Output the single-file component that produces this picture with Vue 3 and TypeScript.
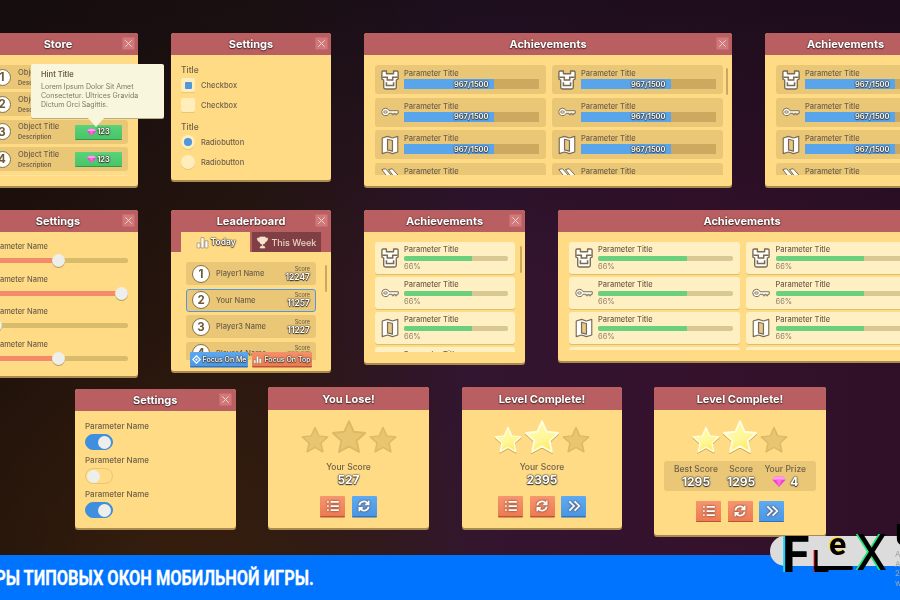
<script setup lang="ts">
type Kind = 'store' | 'checks' | 'bars' | 'sliders' | 'board' | 'greens' | 'toggles' | 'result'

interface Win {
  id: number
  kind: Kind
  title: string
  x: number
  y: number
  w: number
  h: number
  close?: boolean
  listH?: number
  rowW?: number
  cols?: number
  scroll?: boolean
  stars?: number
  score?: string
  next?: boolean
  orangeRefresh?: boolean
  prize?: boolean
}

const windows: Win[] = [
  { id: 1, kind: 'store', title: 'Store', x: -22, y: 33, w: 160, h: 153, close: true },
  { id: 2, kind: 'checks', title: 'Settings', x: 171, y: 33, w: 160, h: 147, close: true },
  { id: 3, kind: 'bars', title: 'Achievements', x: 364, y: 33, w: 368, h: 153, close: true, listH: 110, rowW: 171, cols: 2, scroll: true },
  { id: 4, kind: 'bars', title: 'Achievements', x: 765, y: 33, w: 161, h: 153, close: true, listH: 110, rowW: 171, cols: 1 },
  { id: 5, kind: 'sliders', title: 'Settings', x: -22, y: 210, w: 160, h: 166, close: true },
  { id: 6, kind: 'board', title: 'Leaderboard', x: 171, y: 210, w: 160, h: 161, close: true },
  { id: 7, kind: 'greens', title: 'Achievements', x: 364, y: 210, w: 161, h: 153, close: true, listH: 110, rowW: 140, cols: 1, scroll: true },
  { id: 8, kind: 'greens', title: 'Achievements', x: 558, y: 210, w: 368, h: 151, close: true, listH: 108, rowW: 171, cols: 2 },
  { id: 9, kind: 'toggles', title: 'Settings', x: 75, y: 389, w: 160.5, h: 139, close: true },
  { id: 10, kind: 'result', title: 'You Lose!', x: 268, y: 387, w: 161, h: 141, stars: 0, score: '527' },
  { id: 11, kind: 'result', title: 'Level Complete!', x: 462, y: 387, w: 160, h: 141, stars: 2, score: '2395', next: true, orangeRefresh: true },
  { id: 12, kind: 'result', title: 'Level Complete!', x: 654, y: 387, w: 172, h: 148, stars: 2, next: true, orangeRefresh: true, prize: true },
]

const storeRows = [1, 2, 3, 4]
const icons = ['castle', 'key', 'map', 'swords']
const sliderValues = [0.5, 1, 0, 0.5]
const toggles = [true, false, true]
const players = [
  { place: 1, name: 'Player1 Name', score: '12247' },
  { place: 2, name: 'Your Name', score: '11257', me: true },
  { place: 3, name: 'Player3 Name', score: '11227' },
  { place: 4, name: 'Player4 Name', score: '11207' },
]

function listRows(win: Win): { key: string; icon: string }[] {
  const rows: { key: string; icon: string }[] = []
  for (const icon of icons) {
    for (let c = 0; c < (win.cols ?? 1); c++) {
      rows.push({ key: `${icon}-${c}`, icon })
    }
  }
  return rows
}

function gridColumns(win: Win): string {
  return `repeat(${win.cols ?? 1}, ${win.rowW}px)`
}
</script>

<template>
  <div class="page">
    <svg class="defs" width="0" height="0" aria-hidden="true">
      <defs>
        <linearGradient id="gold" x1="0.2" y1="0" x2="0.7" y2="1">
          <stop offset="0" stop-color="#fffbb0" />
          <stop offset="0.55" stop-color="#fff79a" />
          <stop offset="1" stop-color="#ffe95e" />
        </linearGradient>
        <symbol id="castle" viewBox="2 1 20 22">
          <path d="M3 3.500Q3 2 4.500 2H8v3h8V2h3.500Q21 2 21 3.500V11l-2 1v8q0 2-2 2H7q-2 0-2-2v-8l-2-1z" fill="#fff" stroke="#7a6a50" stroke-width="1.500" stroke-linejoin="round" />
          <path d="M3.500 9H9v3h6V9h5.500M8 14.500v3.500h8v-3.500" fill="none" stroke="#7a6a50" stroke-width="1.700" />
        </symbol>
        <symbol id="key" viewBox="0 0 24 24">
          <path d="M6 7a5 5 0 0 1 4.700 3.300H23v3.400h-2v2h-2v-2h-2v2h-2v-2h-4.300A5 5 0 1 1 6 7z" fill="#fff" stroke="#7a6a50" stroke-width="1.300" stroke-linejoin="round" />
          <ellipse cx="6" cy="12" rx="2.500" ry="1.700" fill="#f2dca6" stroke="#7a6a50" stroke-width="1" />
        </symbol>
        <symbol id="map" viewBox="1 0 22 24">
          <path d="M2.500 3.500L9 1.500l6 2 6.500-2v19L15 22.500l-6-2-6.500 2z" fill="#fff" stroke="#7a6a50" stroke-width="1.400" stroke-linejoin="round" />
          <path d="M9 5l6 1.500v13L9 18z" fill="#e6c98a" stroke="#7a6a50" stroke-width="1.500" stroke-linejoin="round" />
        </symbol>
        <symbol id="swords" viewBox="0 0 24 24">
          <path d="M1 2l5-1 9 10-4 4zM10 2l5-1 9 10-4 4z" fill="#fff" stroke="#7a6a50" stroke-width="1.300" stroke-linejoin="round" />
        </symbol>
        <symbol id="gem" viewBox="0 0 24 20">
          <path d="M5 1h14l5 6-12 13L0 7z" fill="#f23fd0" />
          <path d="M5 1h14l5 6H0z" fill="#ff9cf0" />
          <path d="M7 7h10l-5 13z" fill="#ff6be0" />
        </symbol>
        <symbol id="star" viewBox="0 0 24 24">
          <path d="M12 2l3 6.700 7.200.8-5.400 4.900 1.500 7.100L12 17.900l-6.300 3.600 1.500-7.100L1.800 9.500 9 8.700z" stroke-linejoin="round" stroke-width="1.200" />
        </symbol>
        <symbol id="bars" viewBox="0 0 24 24">
          <path d="M2 13h5.500v9H2zM9.200 3h5.500v19H9.200zM16.500 9H22v13h-5.500z" fill="#fff" stroke="#7a6a50" stroke-width="1" />
        </symbol>
        <symbol id="cup" viewBox="0 0 24 24">
          <path d="M7 2h10v8a5 5 0 0 1-10 0zM7 4H2.500c0 4 1.500 6 5 6.500M17 4h4.500c0 4-1.500 6-5 6.500M12 15v4M7.500 22l1.500-3h6l1.500 3z" fill="#f4e4cc" stroke="#f4e4cc" stroke-width="1.500" />
        </symbol>
        <symbol id="focus" viewBox="0 0 24 24">
          <path d="M12 2l10 10-10 10L2 12z" fill="none" stroke="#fff" stroke-width="3" />
          <circle cx="12" cy="12" r="3" fill="#fff" />
        </symbol>
      </defs>
    </svg>

    <section
      v-for="win in windows"
      :key="win.id"
      class="win"
      :class="`win--${win.kind}`"
      :style="{ left: `${win.x}px`, top: `${win.y}px`, width: `${win.w}px`, height: `${win.h}px` }"
    >
      <header class="win-head">
        <h2 class="win-title">{{ win.title }}</h2>
        <span v-if="win.close" class="win-close">
          <svg viewBox="0 0 14 14"><path d="M3 3l8 8M11 3l-8 8" /></svg>
        </span>
      </header>

      <div v-if="win.kind === 'store'" class="store-list">
        <div v-for="n in storeRows" :key="n" class="store-row">
          <span class="place">{{ n }}</span>
          <div class="store-text">
            <b>Object Title</b>
            <small>Description</small>
          </div>
          <span class="buy">
            <svg class="gem"><use href="#gem" /></svg>
            <span class="outlined">123</span>
          </span>
        </div>
        <div class="store-row store-row--stub" />
        <div class="hint">
          <strong>Hint Title</strong>
          <p>Lorem Ipsum Dolor Sit Amet Consectetur. Ultrices Gravida Dictum Orci Sagittis.</p>
        </div>
      </div>

      <div v-else-if="win.kind === 'checks'" class="checks">
        <h3>Title</h3>
        <label class="check-row"><span class="box box--on"><i /></span>Checkbox</label>
        <label class="check-row"><span class="box" />Checkbox</label>
        <h3 class="checks-second">Title</h3>
        <label class="check-row"><span class="box box--round box--on"><i /></span>Radiobutton</label>
        <label class="check-row"><span class="box box--round" />Radiobutton</label>
      </div>

      <div v-else-if="win.kind === 'bars'" class="list-wrap" :style="{ height: `${win.listH}px` }">
        <div class="grid" :style="{ gridTemplateColumns: gridColumns(win) }">
          <div v-for="row in listRows(win)" :key="row.key" class="bar-row">
            <svg class="row-icon"><use :href="`#${row.icon}`" /></svg>
            <div class="row-main row-main--bar">
              <span class="row-title">Parameter Title</span>
              <div class="bluebar"><div class="bluefill" /><span class="outlined">967/1500</span></div>
            </div>
          </div>
        </div>
        <span v-if="win.scroll" class="scrollbar scrollbar--bars" />
      </div>

      <div v-else-if="win.kind === 'sliders'" class="sliders">
        <div v-for="(value, i) in sliderValues" :key="i" class="slider">
          <span class="param">Parameter Name</span>
          <div class="track">
            <div class="track-fill" :style="{ width: `${value * 100}%` }" />
            <span class="thumb" :style="{ left: `calc(7px + (100% - 14px) * ${value})` }" />
          </div>
        </div>
      </div>

      <template v-else-if="win.kind === 'board'">
        <div class="tabs">
          <span class="tab tab--on"><svg><use href="#bars" /></svg><span class="outlined">Today</span></span>
          <span class="tab"><svg><use href="#cup" /></svg>This Week</span>
        </div>
        <div class="board">
          <div class="board-list">
            <div v-for="p in players" :key="p.place" class="board-row" :class="{ 'board-row--me': p.me }">
              <span class="place place--board">{{ p.place }}</span>
              <span class="board-name">{{ p.name }}</span>
              <span class="board-score"><small>Score</small><span class="outlined">{{ p.score }}</span></span>
            </div>
          </div>
          <span class="scrollbar scrollbar--board" />
          <div class="focus">
            <span class="focus-btn focus-btn--blue"><svg><use href="#focus" /></svg><span class="outlined">Focus On Me</span></span>
            <span class="focus-btn focus-btn--orange"><svg><use href="#bars" /></svg><span class="outlined">Focus On Top</span></span>
          </div>
        </div>
      </template>

      <div v-else-if="win.kind === 'greens'" class="list-wrap" :style="{ height: `${win.listH}px` }">
        <div class="grid grid--greens" :style="{ gridTemplateColumns: gridColumns(win) }">
          <div v-for="row in listRows(win)" :key="row.key" class="green-row">
            <svg class="row-icon"><use :href="`#${row.icon}`" /></svg>
            <div class="row-main">
              <span class="row-title">Parameter Title</span>
              <div class="greenbar"><div class="greenfill" /></div>
              <span class="percent">66%</span>
            </div>
          </div>
        </div>
        <span v-if="win.scroll" class="scrollbar scrollbar--greens" />
      </div>

      <div v-else-if="win.kind === 'toggles'" class="toggles">
        <div v-for="(on, i) in toggles" :key="i" class="toggle-row">
          <span class="param">Parameter Name</span>
          <span class="toggle" :class="{ 'toggle--on': on }"><i /></span>
        </div>
      </div>

      <div v-else class="result">
        <div class="stars">
          <svg v-for="n in 3" :key="n" class="star" :class="{ 'star--big': n === 2, 'star--gold': n <= (win.stars ?? 0) }"><use href="#star" /></svg>
        </div>
        <div v-if="win.prize" class="summary">
          <div><span>Best Score</span><b class="outlined">1295</b></div>
          <div><span>Score</span><b class="outlined">1295</b></div>
          <div><span>Your Prize</span><b class="outlined prize"><svg class="gem gem--big"><use href="#gem" /></svg>4</b></div>
        </div>
        <div v-else class="your-score">
          <span>Your Score</span>
          <b class="outlined">{{ win.score }}</b>
        </div>
        <div class="actions">
          <span class="action action--orange">
            <svg viewBox="0 0 24 24"><path d="M8 5h14M8 12h14M8 19h14M2 5h2.500M2 12h2.500M2 19h2.500" /></svg>
          </span>
          <span class="action" :class="win.orangeRefresh ? 'action--orange' : 'action--blue'">
            <svg viewBox="0 0 24 24"><path d="M4 11a8 8 0 0 1 14-4l2 2M20 13a8 8 0 0 1-14 4l-2-2M20 3v6h-6M4 21v-6h6" /></svg>
          </span>
          <span v-if="win.next" class="action action--blue">
            <svg viewBox="0 0 24 24"><path d="M4 4l8 8-8 8M13 4l8 8-8 8" /></svg>
          </span>
        </div>
      </div>
    </section>

    <footer class="band"><span>ПРИМЕРЫ ТИПОВЫХ ОКОН МОБИЛЬНОЙ ИГРЫ.</span></footer>

    <div class="brand">
      <div class="brand-pill" />
      <div class="brand-notes"><span>А</span><span>А</span><span>2</span><span>w</span></div>
      <span class="logo logo-f">F</span>
      <span class="logo logo-l">L</span>
      <i class="logo-foot" />
      <span class="logo logo-e">e</span>
      <span class="logo logo-x">X</span>
      <span class="logo logo-u">U</span>
    </div>
  </div>
</template>

<style scoped>
.page {
  position: relative;
  width: 900px;
  height: 600px;
  overflow: hidden;
  font-family: Inter, "Liberation Sans", sans-serif;
  color: #6f604a;
  background:
    linear-gradient(180deg, rgba(15, 10, 18, 0.6) 0, rgba(15, 10, 18, 0) 280px),
    radial-gradient(ellipse 330px 260px at 180px 560px, rgba(60, 34, 14, 0.7), rgba(60, 34, 14, 0)),
    linear-gradient(90deg, #1f110a 0, #28160f 28%, #321530 52%, #35112c 78%, #2f1028 100%);
}

.defs {
  position: absolute;
}

.win {
  position: absolute;
  display: flex;
  flex-direction: column;
  box-sizing: border-box;
  background: #ffdb85;
  border-radius: 3px;
  box-shadow: 0 2px 0 #a98b50;
  will-change: transform;
}

.win-head {
  position: relative;
  flex: none;
  display: flex;
  align-items: center;
  justify-content: center;
  height: 22px;
  background: #b95f61;
  border-radius: 3px 3px 0 0;
}

.win--result .win-head {
  height: 23px;
}

.win-title {
  margin: 0;
  font-size: 11px;
  font-weight: 700;
  color: #fff;
  text-shadow: 0 1px 1px #4d2a2a, 0 0 2px #4d2a2a;
}

.win-close {
  position: absolute;
  top: 4px;
  right: 3.500px;
  width: 13px;
  height: 13px;
  background: #d0787a;
  border: 1px solid #c56c6e;
  box-sizing: border-box;
  border-radius: 1px;
}

.win-close svg {
  display: block;
  width: 11px;
  height: 11px;
}

.win-close path {
  stroke: #f5d8d0;
  stroke-width: 1.200;
  fill: none;
}

.outlined {
  color: #fff;
  text-shadow: 0 0 1px #3d372d, 0 0 1px #3d372d, 0 1px 1px #3d372d, 0 0 2px #3d372d;
}

/* store */
.store-list {
  position: relative;
  display: flex;
  flex-direction: column;
  gap: 3.400px;
  padding: 10px 10px 0;
  height: 110px;
}

.store-row {
  flex: none;
  display: flex;
  align-items: center;
  height: 24px;
  padding-left: 5.500px;
  background: #eac777;
  border-radius: 3px;
}

.store-row--stub {
  height: 1px;
  background: #ffe49d;
}

.place {
  flex: none;
  display: flex;
  align-items: center;
  justify-content: center;
  box-sizing: border-box;
  width: 17px;
  height: 17px;
  border-radius: 50%;
  background: #fff;
  border: 1.500px solid #8a6f3e;
  font-size: 11.500px;
  font-weight: 700;
  color: #6f5b35;
}

.store-text {
  display: flex;
  flex-direction: column;
  width: 57px;
  margin-left: 7.500px;
  line-height: 9px;
}

.store-text b {
  font-size: 7.500px;
  font-weight: 500;
  white-space: nowrap;
}

.store-text small {
  margin-top: 1px;
  font-size: 6px;
  font-weight: 600;
  white-space: nowrap;
}

.buy {
  display: flex;
  align-items: center;
  justify-content: center;
  gap: 1.500px;
  width: 46.500px;
  height: 14px;
  font-size: 7.500px;
  font-weight: 600;
  background: linear-gradient(180deg, #5ad379, #49c467);
  border-radius: 1px;
  box-shadow: 0 1px 0 #2e9a49;
}

.gem {
  width: 9px;
  height: 8px;
}

.gem--big {
  width: 14px;
  height: 11px;
}

.hint {
  position: absolute;
  z-index: 2;
  top: 9px;
  left: 53px;
  box-sizing: border-box;
  width: 133px;
  height: 54px;
  padding: 6px 10px;
  color: #7e7764;
  background: #f8f6dc;
  border-radius: 2px;
  box-shadow: 0 1px 0 #b8ae86;
}

.hint::after {
  content: "";
  position: absolute;
  left: 57px;
  top: 54px;
  border-top: 9px solid #f8f6dc;
  border-left: 8px solid transparent;
  border-right: 8px solid transparent;
}

.hint strong {
  display: block;
  margin-bottom: 3px;
  font-size: 7.500px;
  font-weight: 600;
  color: #6f604a;
}

.hint p {
  margin: 0;
  font-size: 7px;
  line-height: 9.100px;
}

/* checks */
.checks {
  padding: 10px 10px 0;
}

.checks h3 {
  margin: 0 0 3px;
  font-size: 8.500px;
  line-height: 10px;
  font-weight: 500;
}

.checks h3.checks-second {
  margin-top: 10px;
}

.check-row {
  display: flex;
  align-items: center;
  gap: 6px;
  height: 14px;
  margin-bottom: 6px;
  font-size: 7.500px;
  font-weight: 500;
}

.box {
  flex: none;
  display: flex;
  align-items: center;
  justify-content: center;
  width: 14px;
  height: 14px;
  background: #ffeebc;
  border-radius: 2px;
  box-shadow: 0 1px 0 #e6c777;
}

.box--round {
  border-radius: 50%;
}

.box i {
  width: 7px;
  height: 7px;
  background: #4f97e0;
  border-radius: 1px;
}

.box--round i {
  width: 7.500px;
  height: 7.500px;
  border-radius: 50%;
}

/* list windows */
.list-wrap {
  position: relative;
  flex: none;
  overflow: hidden;
  margin-top: 10px;
  padding: 0 10px 0 10.500px;
}

.grid {
  display: grid;
  gap: 3.500px 6px;
}

.grid--greens {
  gap: 3px 6.500px;
}

.bar-row {
  display: flex;
  align-items: center;
  height: 29px;
  background: #eac777;
  border-radius: 3px;
}

.green-row {
  display: flex;
  align-items: center;
  height: 32px;
  background: #fff0c4;
  border-radius: 3px;
  box-shadow: 0 1px 0 #e0bd68;
}

.row-icon {
  flex: none;
  width: 18px;
  height: 20px;
  margin: 0 5.500px 0 6px;
}

.row-main {
  flex: 1;
  min-width: 0;
  padding-right: 7px;
}

.row-main--bar {
  padding-bottom: 1px;
}

.row-title {
  display: block;
  font-size: 7.500px;
  line-height: 9px;
  font-weight: 500;
  white-space: nowrap;
}

.bluebar {
  position: relative;
  display: flex;
  align-items: center;
  justify-content: center;
  height: 10px;
  margin-top: 1px;
  background: #cca95f;
  font-size: 7.500px;
  font-weight: 600;
}

.bluefill {
  position: absolute;
  inset: 0 33% 0 0;
  background: #58a5ec;
}

.bluebar .outlined {
  position: relative;
}

.greenbar {
  height: 4.500px;
  margin-top: 2px;
  border-radius: 2px;
  background: #d9c794;
  overflow: hidden;
}

.greenfill {
  width: 66%;
  height: 100%;
  background: #6ad07e;
}

.percent {
  display: block;
  margin-top: 2.500px;
  font-size: 7.500px;
  line-height: 8px;
  color: #8b7f68;
}

.scrollbar {
  position: absolute;
  width: 2px;
  border-radius: 1px;
  background: #c9a866;
}

.scrollbar--bars {
  top: 3px;
  right: 4px;
  height: 27px;
}

.scrollbar--greens {
  top: 4px;
  right: 3px;
  height: 27px;
}

/* sliders */
.sliders {
  padding: 10px 10px 0;
}

.slider {
  height: 32.500px;
}

.param {
  display: block;
  font-size: 7.500px;
  line-height: 10px;
  font-weight: 500;
  white-space: nowrap;
}

.track {
  position: relative;
  height: 5px;
  margin-top: 6px;
  background: #d9bb6c;
  border-radius: 2.500px;
}

.track-fill {
  height: 100%;
  background: #f58a6b;
  border-radius: 2.500px;
}

.thumb {
  position: absolute;
  top: -4px;
  width: 13px;
  height: 13px;
  margin-left: -6.500px;
  background: #eeeeea;
  border-radius: 50%;
  box-shadow: 0 1px 0 #b79a5c;
}

/* leaderboard */
.tabs {
  flex: none;
  display: flex;
  gap: 1.500px;
  height: 20px;
  padding: 0 10px;
  background: #b95f61;
}

.tab {
  flex: 1;
  display: flex;
  align-items: center;
  justify-content: center;
  gap: 2px;
  font-size: 9px;
  font-weight: 500;
  white-space: nowrap;
  color: #e9d2c0;
  background: #7f3f44;
}

.tab--on {
  background: #ffdb85;
  font-size: 8.500px;
  font-weight: 600;
}

.tab svg {
  width: 13px;
  height: 13px;
}

.board {
  position: relative;
  flex: 1;
  min-height: 0;
  padding: 10px 15px 0;
}

.board-list {
  display: flex;
  flex-direction: column;
  gap: 3.500px;
  height: 98px;
  overflow: hidden;
}

.board-row {
  flex: none;
  display: flex;
  align-items: center;
  box-sizing: border-box;
  height: 23px;
  padding: 0 6px;
  background: #eac777;
  border-radius: 3px;
}

.board-row--me {
  border: 1px solid #4f97e0;
  padding: 0 5px;
}

.place--board {
  width: 18px;
  height: 18px;
}

.board-name {
  flex: 1;
  margin-left: 6px;
  font-size: 7.500px;
  font-weight: 500;
}

.board-score {
  display: flex;
  flex-direction: column;
  align-items: flex-end;
  font-size: 8.500px;
  font-weight: 600;
  line-height: 9px;
}

.board-score small {
  font-size: 5.500px;
  font-weight: 500;
  line-height: 7px;
}

.scrollbar--board {
  top: 13px;
  right: 4px;
  height: 27px;
}

.focus {
  position: absolute;
  left: 19px;
  bottom: 5px;
  display: flex;
  gap: 4px;
}

.focus-btn {
  display: flex;
  align-items: center;
  justify-content: center;
  gap: 2px;
  height: 14px;
  font-size: 7px;
  font-weight: 500;
  white-space: nowrap;
  border-radius: 1px;
}

.focus-btn svg {
  width: 9px;
  height: 9px;
}

.focus-btn--blue {
  width: 58px;
  background: linear-gradient(180deg, #5ba8f0, #4d98e6);
  box-shadow: 0 1.500px 0 #2f74bd;
}

.focus-btn--orange {
  width: 60px;
  background: linear-gradient(180deg, #f4906a, #ec7a52);
  box-shadow: 0 1.500px 0 #bb5335;
}

/* toggles */
.toggles {
  padding: 11px 10px 0;
}

.toggle-row {
  height: 34px;
}

.toggle-row .param {
  line-height: 9px;
  font-size: 8px;
}

.toggle {
  display: flex;
  align-items: center;
  box-sizing: border-box;
  width: 27.500px;
  height: 16px;
  margin-top: 3px;
  padding: 0 1px;
  border: 1px solid #ebc672;
  border-radius: 8px;
  background: #ffdb85;
}

.toggle i {
  width: 13px;
  height: 13px;
  border-radius: 50%;
  background: #eeeeea;
}

.toggle--on {
  justify-content: flex-end;
  background: #3f8fde;
  border-color: #3f8fde;
}

/* result */
.result {
  flex: 1;
  display: flex;
  flex-direction: column;
  align-items: center;
  padding-top: 10px;
}

.stars {
  display: flex;
  align-items: flex-start;
  justify-content: center;
  height: 32px;
  margin-top: 1px;
}

.star {
  width: 30px;
  height: 30px;
  margin-top: 4px;
  fill: #e8c571;
  stroke: #dcb965;
}

.star--big {
  width: 38px;
  height: 38px;
  margin-top: -3px;
}

.star--gold {
  fill: url(#gold);
  stroke: #fffde0;
  filter: drop-shadow(0 1px 0 #cfa549);
}

.your-score {
  display: flex;
  flex-direction: column;
  align-items: center;
  margin-top: 9px;
  font-size: 8.500px;
  font-weight: 500;
  line-height: 11px;
}

.your-score b {
  font-size: 12px;
  font-weight: 700;
  line-height: 13px;
}

.summary {
  display: flex;
  align-items: center;
  justify-content: space-between;
  box-sizing: border-box;
  width: 152px;
  height: 30px;
  margin-top: 8px;
  padding: 0 10px;
  background: #eac777;
  border-radius: 3px;
  font-size: 8.500px;
  font-weight: 500;
}

.summary div {
  display: flex;
  flex-direction: column;
  align-items: center;
  line-height: 11px;
}

.summary b {
  font-size: 12px;
  font-weight: 700;
  line-height: 13px;
}

.prize {
  display: flex;
  align-items: center;
  gap: 4px;
}

.actions {
  display: flex;
  gap: 6.500px;
  margin-top: 9.500px;
}

.action {
  display: flex;
  align-items: center;
  justify-content: center;
  width: 25px;
  height: 20px;
  border-radius: 1px;
}

.action svg {
  width: 14px;
  height: 14px;
  fill: none;
  stroke: #fff;
  stroke-width: 3;
  filter: drop-shadow(0 0 1px #5a3326);
}

.action--orange {
  background: linear-gradient(180deg, #f6966f, #ec7a52);
  box-shadow: 0 1.500px 0 #bb5335;
}

.action--blue {
  background: linear-gradient(180deg, #5fabf2, #4a96e4);
  box-shadow: 0 1.500px 0 #2f74bd;
}

/* bottom band */
.band {
  position: absolute;
  left: 0;
  right: 0;
  bottom: 0;
  height: 45px;
  display: flex;
  align-items: center;
  background: #0073ff;
}

.band span {
  flex: none;
  margin-left: -62px;
  font-family: Roboto, "Liberation Sans", sans-serif;
  font-size: 21px;
  font-weight: 700;
  color: #fff;
  white-space: nowrap;
  transform: scaleX(0.78);
  transform-origin: left;
  -webkit-text-stroke: 0.3px #fff;
}

.brand {
  position: absolute;
  left: 770px;
  top: 525px;
  width: 130px;
  height: 60px;
}

.brand-pill {
  position: absolute;
  left: 0;
  top: 11px;
  width: 150px;
  height: 30px;
  background: #dcdcdc;
  border-radius: 16px 0 0 16px;
}

.brand-notes {
  position: absolute;
  left: 125px;
  top: 25px;
  display: flex;
  flex-direction: column;
  font-size: 8px;
  line-height: 9.500px;
  color: #a2a2a2;
}

.logo {
  position: absolute;
  font-family: Roboto, "Liberation Sans", sans-serif;
  font-weight: 700;
  line-height: 1;
  color: #000;
}

.logo-f {
  left: 12px;
  top: 5px;
  font-size: 50px;
  text-shadow: -2px 0 0 #19d3ff;
}

.logo-l {
  left: 42px;
  top: 20px;
  font-size: 32px;
  font-weight: 400;
  text-shadow: -1px 0 0 #ff0018;
}

.logo-foot {
  position: absolute;
  left: 44px;
  top: 41px;
  width: 39px;
  height: 4px;
  background: #000;
  border-radius: 2px;
}

.logo-e {
  left: 59px;
  top: 3px;
  font-size: 32px;
  text-shadow: -1px -1px 0 #ffd800;
}

.logo-x {
  left: 86px;
  top: 3px;
  font-size: 50px;
  font-weight: 400;
  text-shadow: -2px 0 0 #1fe87a;
}

.logo-u {
  left: 125px;
  top: -6px;
  font-size: 32px;
}
</style>
